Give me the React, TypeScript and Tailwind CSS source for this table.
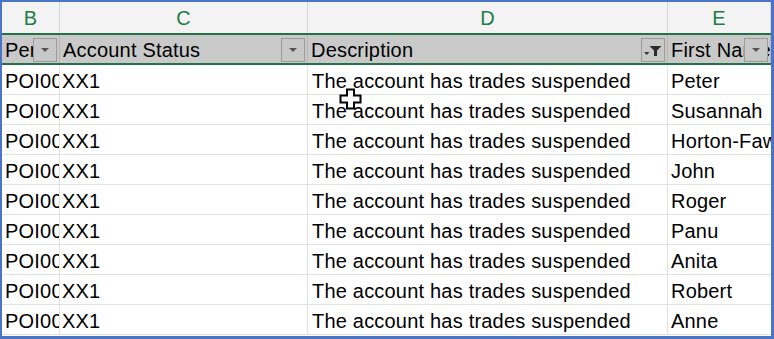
const cols = [
  { letter: "B", width: 58, head: "Per", filtered: false },
  { letter: "C", width: 248, head: "Account Status", filtered: false },
  { letter: "D", width: 360, head: "Description", filtered: true },
  { letter: "E", width: 103, head: "First Name", filtered: false },
];

const names = ["Peter", "Susannah", "Horton-Fawkes", "John", "Roger", "Panu", "Anita", "Robert", "Anne"];

function DropButton({ filtered }: { filtered: boolean }) {
  return (
    <div className="absolute right-[2px] top-[3px] w-[24px] h-[24px] border border-[#9c9c9c] bg-[#c8c8c8] flex items-center justify-center">
      {filtered ? (
        <svg width="20" height="16" viewBox="0 0 20 16" className="mt-[4px]">
          <path d="M6.5 2h12l-4.5 4.5V12h-3V6.5z" fill="#2b2b2b" />
          <path d="M1 8h5.5l-2.75 3z" fill="#3a3a3a" />
        </svg>
      ) : (
        <svg width="10" height="6" viewBox="0 0 10 6">
          <path d="M1 1h8l-4 4z" fill="#555" />
        </svg>
      )}
    </div>
  );
}

export default function App() {
  return (
    <div className="relative w-[774px] h-[339px] bg-white border-l-2 border-t-2 border-b-[3px] border-r-[3px] border-[#4a74c6] overflow-hidden font-['Liberation_Sans',sans-serif] text-[20px] tracking-[0.2px] text-black">
      {/* column letters */}
      <div className="flex h-[31px] bg-[#f3f3f3]">
        {cols.map((c) => (
          <div
            key={c.letter}
            style={{ width: c.width }}
            className="shrink-0 border-r border-[#d6d6d6] flex items-center justify-center text-[#1e7b46] text-[20px]"
          >
            {c.letter}
          </div>
        ))}
      </div>
      <div className="h-[2px] bg-[#227447]" />
      {/* header row */}
      <div className="flex h-[28px] bg-[#c9c9c9]">
        {cols.map((c) => (
          <div
            key={c.letter}
            style={{ width: c.width }}
            className="relative shrink-0 border-r border-[#b4b4b4] overflow-hidden whitespace-nowrap pl-[3px] leading-[30px]"
          >
            {c.head}
            <DropButton filtered={c.filtered} />
          </div>
        ))}
      </div>
      <div className="h-[2px] bg-[#227447]" />
      {/* data */}
      {names.map((n, i) => (
        <div key={i} className="flex h-[30px] border-b border-[#e2e2e2]">
          <div className="w-[58px] shrink-0 border-r border-[#e2e2e2] overflow-hidden whitespace-nowrap pl-[3px] leading-[32px]">
            POI0012
          </div>
          <div className="w-[248px] shrink-0 border-r border-[#e2e2e2] overflow-hidden whitespace-nowrap pl-[2px] leading-[32px]">
            XX1
          </div>
          <div className="w-[360px] shrink-0 border-r border-[#e2e2e2] overflow-hidden whitespace-nowrap pl-[4px] leading-[32px]">
            The account has trades suspended
          </div>
          <div className="w-[103px] shrink-0 overflow-hidden whitespace-nowrap pl-[3px] leading-[32px]">
            {n}
          </div>
        </div>
      ))}
      {/* mouse cursor */}
      <svg className="absolute left-[337px] top-[86px]" width="23" height="22" viewBox="0 0 23 22">
        <path d="M8 1.5h7v6h6.5v7h-6.5v6h-7v-6h-6.5v-7h6.5z" fill="#fff" stroke="#000" strokeWidth="2" />
      </svg>
    </div>
  );
}
